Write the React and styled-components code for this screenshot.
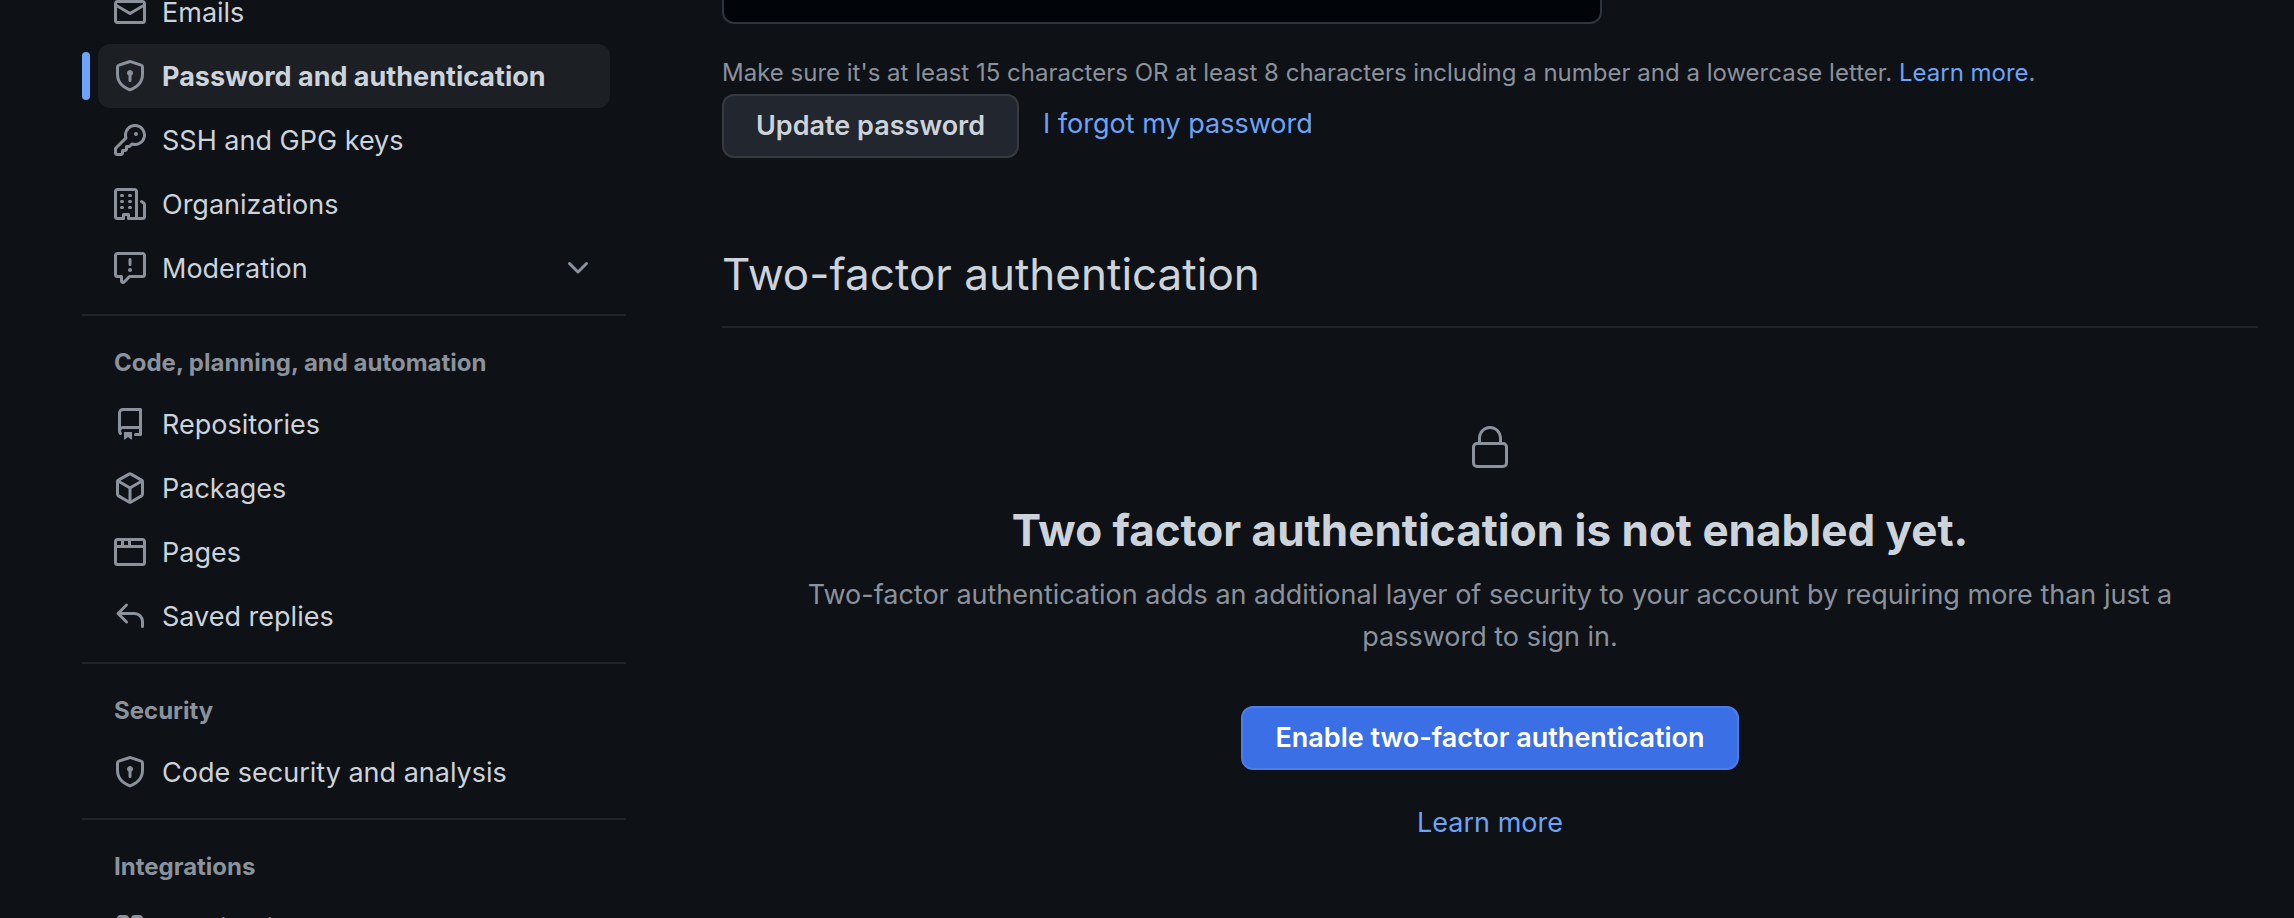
import React from "react";
import styled, { createGlobalStyle, css } from "styled-components";

const color = {
  canvas: "#0e1116",
  inset: "#010409",
  text: "#cdd3db",
  muted: "#8b929c",
  link: "#6ca4f8",
  line: "#21252b",
  control: "#22262e",
  controlLine: "#363b41",
  active: "#1c1f24",
  primary: "#3a6fe5",
  primaryLine: "#4c7de9",
};

const GlobalStyle = createGlobalStyle`
  * { box-sizing: border-box; }
  html { background: ${color.canvas}; }
  body {
    margin: 0;
    height: 100vh;
    overflow: hidden;
    background: ${color.canvas};
    color: ${color.text};
    font-family: Inter, "Liberation Sans", sans-serif;
    font-size: 27px;
    line-height: 42px;
  }
`;

const Page = styled.div`
  display: flex;
  gap: 96px;
  margin-top: -40px;
  padding: 0 36px 0 82px;
`;

const Sidebar = styled.nav`
  flex: 0 0 544px;
  padding-top: 20px;
`;

const NavList = styled.ul`
  list-style: none;
  margin: 0;
  padding: 0 16px;
`;

const NavItem = styled.li`
  position: relative;
  ${(p) =>
    p.$active &&
    css`
      &::before {
        content: "";
        position: absolute;
        left: -16px;
        top: 8px;
        width: 8px;
        height: 48px;
        border-radius: 6px;
        background: ${color.link};
      }
    `}
`;

const itemStyle = css`
  display: flex;
  align-items: center;
  gap: 16px;
  width: 100%;
  height: 64px;
  padding: 0 16px;
  border: 0;
  border-radius: 12px;
  color: ${color.text};
  font: inherit;
  text-align: left;
  text-decoration: none;
  background: ${(p) => (p.$active ? color.active : "transparent")};
  font-weight: ${(p) => (p.$active ? 700 : 400)};
`;

const NavLink = styled.a`
  ${itemStyle}
`;

const NavToggle = styled.button`
  ${itemStyle}
`;

const NavLabel = styled.span`
  flex: 1;
  padding-top: 2px;
`;

const Divider = styled.hr`
  height: 2px;
  margin: 14px 0 16px;
  border: 0;
  background: ${color.line};
`;

const GroupTitle = styled.h3`
  margin: 0;
  padding: 13px 32px 11px;
  color: ${color.muted};
  font-size: 24px;
  font-weight: 700;
  line-height: 36px;
`;

const Icon = styled.svg`
  flex: none;
  display: block;
  width: ${(p) => p.$size || 32}px;
  height: ${(p) => p.$size || 32}px;
  fill: ${color.muted};
`;

const Main = styled.main`
  flex: 1;
  min-width: 0;
`;

const PasswordInput = styled.input`
  display: block;
  width: 880px;
  max-width: 100%;
  height: 64px;
  padding: 0 24px;
  border: 2px solid #2f353d;
  border-radius: 12px;
  background: ${color.inset};
  color: ${color.text};
  font: inherit;
`;

const Hint = styled.p`
  margin: 31px 0 3px;
  color: ${color.muted};
  font-size: 24px;
  line-height: 36px;
`;

const Link = styled.a`
  color: ${color.link};
  text-decoration: none;
`;

const Button = styled.button`
  height: 64px;
  padding: 0 32px;
  border: 2px solid ${(p) => (p.$primary ? color.primaryLine : color.controlLine)};
  border-radius: 12px;
  background: ${(p) => (p.$primary ? color.primary : color.control)};
  color: ${(p) => (p.$primary ? "#ffffff" : color.text)};
  font: inherit;
  font-weight: 600;
  vertical-align: middle;
`;

const Actions = styled.div`
  ${Button} {
    margin-right: 24px;
  }
`;

const SectionTitle = styled.h2`
  margin: 80px 0 0;
  padding-bottom: 16px;
  border-bottom: 2px solid ${color.line};
  font-size: 44px;
  font-weight: 400;
  line-height: 72px;
`;

const Blankslate = styled.section`
  display: flex;
  flex-direction: column;
  align-items: center;
  padding: 96px 64px 64px;
  text-align: center;
`;

const BlankTitle = styled.h3`
  margin: 22px 0 8px;
  font-size: 44px;
  font-weight: 700;
  line-height: 72px;
`;

const BlankText = styled.p`
  margin: 0 0 48px;
  color: ${color.muted};
`;

const BlankLink = styled(Link)`
  margin-top: 32px;
`;

const paths = {
  mail: "M1.75 2h12.5c.966 0 1.75.784 1.75 1.75v8.5A1.75 1.75 0 0 1 14.25 14H1.75A1.75 1.75 0 0 1 0 12.25v-8.5C0 2.784.784 2 1.75 2ZM1.5 12.251c0 .138.112.25.25.25h12.5a.25.25 0 0 0 .25-.25V5.809L8.38 9.397a.75.75 0 0 1-.76 0L1.5 5.809v6.442Zm13-8.181v-.32a.25.25 0 0 0-.25-.25H1.75a.25.25 0 0 0-.25.25v.32L8 7.88Z",
  shield: "m8.533.133 5.25 1.68A1.75 1.75 0 0 1 15 3.48V7c0 1.566-.32 3.182-1.303 4.682-.983 1.498-2.585 2.813-5.032 3.855a1.697 1.697 0 0 1-1.33 0c-2.447-1.042-4.049-2.357-5.032-3.855C1.32 10.182 1 8.566 1 7V3.48a1.755 1.755 0 0 1 1.217-1.667l5.25-1.68a1.748 1.748 0 0 1 1.066 0Zm-.61 1.429.001.001-5.25 1.68a.251.251 0 0 0-.174.237V7c0 1.36.275 2.666 1.057 3.859.784 1.194 2.121 2.342 4.366 3.298a.196.196 0 0 0 .154 0c2.245-.957 3.582-2.103 4.366-3.297C13.225 9.666 13.5 8.358 13.5 7V3.48a.25.25 0 0 0-.174-.238l-5.25-1.68a.25.25 0 0 0-.153 0ZM9.5 6.5c0 .536-.286 1.032-.75 1.3v2.45a.75.75 0 0 1-1.5 0V7.8A1.5 1.5 0 1 1 9.5 6.5Z",
  key: "M10.5 0a5.499 5.499 0 1 1-1.288 10.848l-.932.932a.749.749 0 0 1-.53.22H7v.75a.749.749 0 0 1-.22.53l-.5.5a.749.749 0 0 1-.53.22H5v.75a.749.749 0 0 1-.22.53l-.5.5a.749.749 0 0 1-.53.22h-2A1.75 1.75 0 0 1 0 14.25v-2c0-.199.079-.389.22-.53l4.932-4.932A5.5 5.5 0 0 1 10.5 0Zm-4 5.5c-.001.431.069.86.205 1.269a.75.75 0 0 1-.181.768L1.5 12.56v1.69c0 .138.112.25.25.25h1.69l.06-.06v-1.19a.75.75 0 0 1 .75-.75h1.19l.06-.06v-1.19a.75.75 0 0 1 .75-.75h1.19l1.023-1.025a.75.75 0 0 1 .768-.18A4 4 0 1 0 6.5 5.5ZM11 6a1 1 0 1 1 0-2 1 1 0 0 1 0 2Z",
  organization: "M1.75 16A1.75 1.75 0 0 1 0 14.25V1.75C0 .784.784 0 1.75 0h8.5C11.216 0 12 .784 12 1.75v12.5c0 .085-.006.168-.018.25h2.268a.25.25 0 0 0 .25-.25V8.285a.25.25 0 0 0-.111-.208l-1.055-.703a.749.749 0 1 1 .832-1.248l1.055.703c.487.325.779.871.779 1.456v5.965A1.75 1.75 0 0 1 14.25 16h-3.5a.766.766 0 0 1-.197-.026c-.099.017-.2.026-.303.026h-3a.75.75 0 0 1-.75-.75V14h-1v1.25a.75.75 0 0 1-.75.75Zm-.25-1.75c0 .138.112.25.25.25H4v-1.25a.75.75 0 0 1 .75-.75h2.5a.75.75 0 0 1 .75.75v1.25h2.25a.25.25 0 0 0 .25-.25V1.75a.25.25 0 0 0-.25-.25h-8.5a.25.25 0 0 0-.25.25ZM3.75 6h.5a.75.75 0 0 1 0 1.5h-.5a.75.75 0 0 1 0-1.5ZM3 3.75A.75.75 0 0 1 3.75 3h.5a.75.75 0 0 1 0 1.5h-.5A.75.75 0 0 1 3 3.75Zm4 3A.75.75 0 0 1 7.75 6h.5a.75.75 0 0 1 0 1.5h-.5A.75.75 0 0 1 7 6.75ZM7.75 3h.5a.75.75 0 0 1 0 1.5h-.5a.75.75 0 0 1 0-1.5ZM3 9.75A.75.75 0 0 1 3.75 9h.5a.75.75 0 0 1 0 1.5h-.5A.75.75 0 0 1 3 9.75ZM7.75 9h.5a.75.75 0 0 1 0 1.5h-.5a.75.75 0 0 1 0-1.5Z",
  report: "M0 1.75C0 .784.784 0 1.75 0h12.5C15.216 0 16 .784 16 1.75v9.5A1.75 1.75 0 0 1 14.25 13H8.06l-2.573 2.573A1.458 1.458 0 0 1 3 14.543V13H1.75A1.75 1.75 0 0 1 0 11.25Zm1.75-.25a.25.25 0 0 0-.25.25v9.5c0 .138.112.25.25.25h2a.75.75 0 0 1 .75.75v2.19l2.72-2.72a.749.749 0 0 1 .53-.22h6.5a.25.25 0 0 0 .25-.25v-9.5a.25.25 0 0 0-.25-.25Zm7 2.25v2.5a.75.75 0 0 1-1.5 0v-2.5a.75.75 0 0 1 1.5 0ZM9 9a1 1 0 1 1-2 0 1 1 0 0 1 2 0Z",
  repo: "M2 2.5A2.5 2.5 0 0 1 4.5 0h8.75a.75.75 0 0 1 .75.75v12.5a.75.75 0 0 1-.75.75h-2.5a.75.75 0 0 1 0-1.5h1.75v-2h-8a1 1 0 0 0-.714 1.7.75.75 0 1 1-1.072 1.05A2.495 2.495 0 0 1 2 11.5Zm10.5-1h-8a1 1 0 0 0-1 1v6.708A2.486 2.486 0 0 1 4.5 9h8ZM5 12.25a.25.25 0 0 1 .25-.25h3.5a.25.25 0 0 1 .25.25v3.25a.25.25 0 0 1-.4.2l-1.45-1.087a.249.249 0 0 0-.3 0L5.4 15.7a.25.25 0 0 1-.4-.2Z",
  package: "m8.878.392 5.25 3.045c.54.314.872.89.872 1.514v6.098a1.75 1.75 0 0 1-.872 1.514l-5.25 3.045a1.75 1.75 0 0 1-1.756 0l-5.25-3.045A1.75 1.75 0 0 1 1 11.049V4.951c0-.624.332-1.201.872-1.514L7.122.392a1.75 1.75 0 0 1 1.756 0ZM7.875 1.69l-4.63 2.685L8 7.133l4.755-2.758-4.63-2.685a.248.248 0 0 0-.25 0ZM2.5 5.677v5.372c0 .09.047.171.125.216l4.625 2.683V8.432Zm6.25 8.271 4.625-2.683a.25.25 0 0 0 .125-.216V5.677L8.75 8.432Z",
  browser: "M0 2.75C0 1.784.784 1 1.75 1h12.5c.966 0 1.75.784 1.75 1.75v10.5A1.75 1.75 0 0 1 14.25 15H1.75A1.75 1.75 0 0 1 0 13.25ZM14.5 6h-13v7.25c0 .138.112.25.25.25h12.5a.25.25 0 0 0 .25-.25Zm-6-3.5v2h6V2.75a.25.25 0 0 0-.25-.25ZM5 2.5v2h2v-2Zm-3.25 0a.25.25 0 0 0-.25.25V4.5h2v-2Z",
  reply: "M6.78 1.97a.75.75 0 0 1 0 1.06L3.81 6h6.44A4.75 4.75 0 0 1 15 10.75v2.5a.75.75 0 0 1-1.5 0v-2.5a3.25 3.25 0 0 0-3.25-3.25H3.81l2.97 2.97a.749.749 0 0 1-.326 1.275.749.749 0 0 1-.734-.215L1.47 7.28a.75.75 0 0 1 0-1.06l4.25-4.25a.75.75 0 0 1 1.06 0Z",
  apps: "M1.5 3.25c0-.966.784-1.75 1.75-1.75h2.5c.966 0 1.75.784 1.75 1.75v2.5A1.75 1.75 0 0 1 5.75 7.5h-2.5A1.75 1.75 0 0 1 1.5 5.75ZM3.25 3a.25.25 0 0 0-.25.25v2.5c0 .138.112.25.25.25h2.5A.25.25 0 0 0 6 5.75v-2.5A.25.25 0 0 0 5.75 3ZM8.5 3.25c0-.966.784-1.75 1.75-1.75h2.5c.966 0 1.75.784 1.75 1.75v2.5a1.75 1.75 0 0 1-1.75 1.75h-2.5A1.75 1.75 0 0 1 8.5 5.75ZM10.25 3a.25.25 0 0 0-.25.25v2.5c0 .138.112.25.25.25h2.5a.25.25 0 0 0 .25-.25v-2.5a.25.25 0 0 0-.25-.25ZM1.5 10.25c0-.966.784-1.75 1.75-1.75h2.5c.966 0 1.75.784 1.75 1.75v2.5a1.75 1.75 0 0 1-1.75 1.75h-2.5a1.75 1.75 0 0 1-1.75-1.75ZM3.25 10a.25.25 0 0 0-.25.25v2.5c0 .138.112.25.25.25h2.5a.25.25 0 0 0 .25-.25v-2.5a.25.25 0 0 0-.25-.25ZM8.5 10.25c0-.966.784-1.75 1.75-1.75h2.5c.966 0 1.75.784 1.75 1.75v2.5a1.75 1.75 0 0 1-1.75 1.75h-2.5a1.75 1.75 0 0 1-1.75-1.75ZM10.25 10a.25.25 0 0 0-.25.25v2.5c0 .138.112.25.25.25h2.5a.25.25 0 0 0 .25-.25v-2.5a.25.25 0 0 0-.25-.25Z",
  chevron: "M12.78 5.22a.749.749 0 0 1 0 1.06l-4.25 4.25a.749.749 0 0 1-1.06 0L3.22 6.28a.749.749 0 1 1 1.06-1.06L8 8.939l3.72-3.719a.749.749 0 0 1 1.06 0Z",
  lock: "M6 9V7.25C6 3.845 8.503 1 12 1s6 2.845 6 6.25V9h.5a2.5 2.5 0 0 1 2.5 2.5v8a2.5 2.5 0 0 1-2.5 2.5h-13A2.5 2.5 0 0 1 3 19.5v-8A2.5 2.5 0 0 1 5.5 9Zm-1.5 2.5v8a1 1 0 0 0 1 1h13a1 1 0 0 0 1-1v-8a1 1 0 0 0-1-1h-13a1 1 0 0 0-1 1Zm3-4.25V9h9V7.25c0-2.67-1.922-4.75-4.5-4.75-2.578 0-4.5 2.08-4.5 4.75Z",
};

const Glyph = ({ name, grid = 16, size }) => (
  <Icon viewBox={`0 0 ${grid} ${grid}`} $size={size} aria-hidden="true">
    <path d={paths[name]} />
  </Icon>
);

const groups = [
  {
    items: [
      { icon: "mail", label: "Emails" },
      { icon: "shield", label: "Password and authentication", active: true },
      { icon: "key", label: "SSH and GPG keys" },
      { icon: "organization", label: "Organizations" },
      { icon: "report", label: "Moderation", expandable: true },
    ],
  },
  {
    title: "Code, planning, and automation",
    items: [
      { icon: "repo", label: "Repositories" },
      { icon: "package", label: "Packages" },
      { icon: "browser", label: "Pages" },
      { icon: "reply", label: "Saved replies" },
    ],
  },
  {
    title: "Security",
    items: [{ icon: "shield", label: "Code security and analysis" }],
  },
  {
    title: "Integrations",
    items: [{ icon: "apps", label: "Applications" }],
  },
];

const NavEntry = ({ icon, label, active, expandable }) => (
  <NavItem $active={active}>
    {expandable ? (
      <NavToggle type="button" aria-expanded="false">
        <Glyph name={icon} />
        <NavLabel>{label}</NavLabel>
        <Glyph name="chevron" />
      </NavToggle>
    ) : (
      <NavLink href="#" $active={active} aria-current={active ? "page" : undefined}>
        <Glyph name={icon} />
        <NavLabel>{label}</NavLabel>
      </NavLink>
    )}
  </NavItem>
);

export default function App() {
  return (
    <>
      <GlobalStyle />
      <Page>
        <Sidebar aria-label="Settings">
          {groups.map((group, i) => (
            <React.Fragment key={i}>
              {i > 0 && <Divider />}
              {group.title && <GroupTitle>{group.title}</GroupTitle>}
              <NavList>
                {group.items.map((item) => (
                  <NavEntry key={item.label} {...item} />
                ))}
              </NavList>
            </React.Fragment>
          ))}
        </Sidebar>
        <Main>
          <PasswordInput type="password" aria-label="Confirm new password" />
          <Hint>
            Make sure it's at least 15 characters OR at least 8 characters including a number and a
            lowercase letter. <Link href="#">Learn more</Link>.
          </Hint>
          <Actions>
            <Button type="button">Update password</Button>
            <Link href="#">I forgot my password</Link>
          </Actions>
          <SectionTitle>Two-factor authentication</SectionTitle>
          <Blankslate>
            <Glyph name="lock" grid={24} size={48} />
            <BlankTitle>Two factor authentication is not enabled yet.</BlankTitle>
            <BlankText>
              Two-factor authentication adds an additional layer of security to your account by
              requiring more than just a password to sign in.
            </BlankText>
            <Button type="button" $primary>
              Enable two-factor authentication
            </Button>
            <BlankLink href="#">Learn more</BlankLink>
          </Blankslate>
        </Main>
      </Page>
    </>
  );
}
